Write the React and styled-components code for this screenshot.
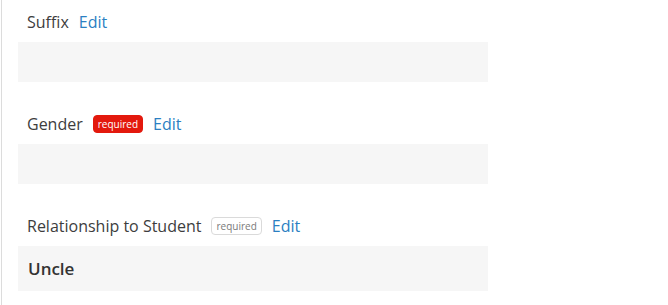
import React from "react";
import styled, { createGlobalStyle } from "styled-components";

const Global = createGlobalStyle`
  html, body { margin: 0; padding: 0; background: #fff; }
  body { font-family: "Open Sans", "Liberation Sans", sans-serif; }
`;

const Panel = styled.div`
  margin-left: 1px;
  border-left: 1px solid #dcdcdc;
  min-height: 305px;
  padding-left: 16px;
  box-sizing: border-box;
`;

const Field = styled.section`
  width: 470px;
  margin-bottom: 20px;
`;

const LabelRow = styled.div`
  height: 42px;
  box-sizing: border-box;
  padding: 2px 0 0 9px;
  display: flex;
  align-items: center;
  gap: 10px;
`;

const Label = styled.span`
  font-size: 16px;
  line-height: 20px;
  color: #3d3d3d;
`;

const Badge = styled.span`
  display: inline-flex;
  align-items: center;
  height: 18px;
  box-sizing: border-box;
  padding: 0 4px;
  border-radius: 4px;
  font-size: 10px;
  line-height: 1;
  background: ${(p) => (p.$filled ? "#e3190d" : "#fff")};
  color: ${(p) => (p.$filled ? "#fff" : "#7a7a7a")};
  border: 1px solid ${(p) => (p.$filled ? "#e3190d" : "#dadada")};
`;

const EditLink = styled.a`
  font-size: 16px;
  line-height: 20px;
  color: #2b7fc2;
  text-decoration: none;
  cursor: pointer;
`;

const Value = styled.div`
  background: #f6f6f6;
  box-sizing: border-box;
  padding: 0 10px;
  display: flex;
  align-items: center;
  font-size: 17px;
  font-weight: 600;
  color: #333;
  height: ${(p) => (p.$tall ? "45px" : "40px")};
`;

const fields = [
  { label: "Suffix", required: null, value: "" },
  { label: "Gender", required: "filled", value: "" },
  { label: "Relationship to Student", required: "outline", value: "Uncle" },
];

export default function App() {
  return (
    <>
      <Global />
      <Panel>
        {fields.map((f) => (
          <Field key={f.label}>
            <LabelRow>
              <Label>{f.label}</Label>
              {f.required && <Badge $filled={f.required === "filled"}>required</Badge>}
              <EditLink>Edit</EditLink>
            </LabelRow>
            <Value $tall={!!f.value}>{f.value}</Value>
          </Field>
        ))}
      </Panel>
    </>
  );
}
